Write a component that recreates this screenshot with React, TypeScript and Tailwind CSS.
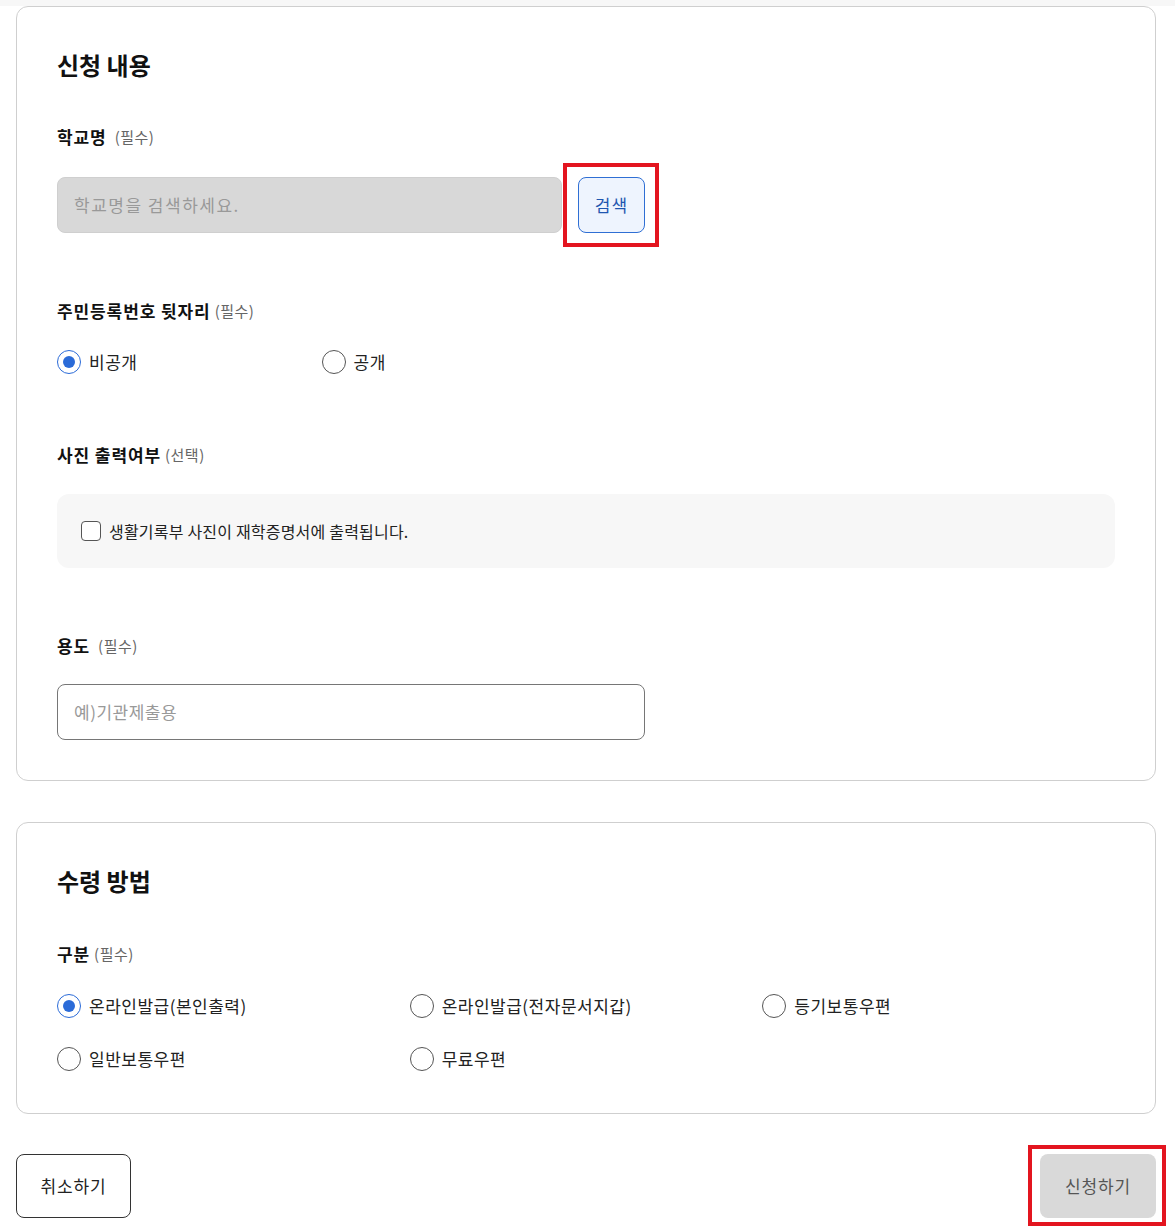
import React from "react";

const font = { fontFamily: '"Noto Sans CJK KR", "Noto Sans", sans-serif' };

function Radio({ label, checked }: { label: string; checked?: boolean }) {
  return (
    <label className="flex items-center gap-2 h-6">
      <span
        className={
          checked
            ? "w-6 h-6 rounded-full border border-[#2b6bd8] flex items-center justify-center bg-white"
            : "w-6 h-6 rounded-full border border-[#555] bg-white"
        }
      >
        {checked && <span className="w-3 h-3 rounded-full bg-[#2b6bd8]" />}
      </span>
      <span className="text-[17px] tracking-[0.5px] text-[#222] leading-6">{label}</span>
    </label>
  );
}

function Label({ title, note, gap }: { title: string; note: string; gap?: boolean }) {
  return (
    <div className="flex items-center h-6 leading-6">
      <span className="text-[17px] tracking-[0.9px] font-bold text-[#111]">{title}</span>
      <span className={gap ? "text-[15px] tracking-[0.5px] text-[#666] ml-2" : "text-[15px] tracking-[0.5px] text-[#666] ml-1"}>
        {note}
      </span>
    </div>
  );
}

export default function App() {
  return (
    <div style={font} className="bg-white w-[1175px] min-h-[1230px] text-[#111]">
      <div className="h-[6px] bg-[#f7f7f7]" />
      <div className="pl-4 w-[1156px]">
        {/* Card 1 */}
        <section className="border border-[#cfcfcf] rounded-xl px-10 pt-[42px] pb-[40px]">
          <h2 className="text-2xl font-bold leading-8 text-[#111]">신청 내용</h2>

          <div className="mt-[44px]">
            <Label title="학교명" note="(필수)" gap />
            <div className="mt-[28px] flex items-center gap-4">
              <div className="w-[505px] h-14 rounded-lg bg-[#d8d8d8] border border-[#cfcfcf] flex items-center px-4 text-[17px] tracking-[1.5px] text-[#999]">
                학교명을 검색하세요.
              </div>
              <div className="relative">
                <button className="w-[67px] h-14 rounded-lg bg-[#eef4fe] border border-[#2f6fd4] text-[17px] tracking-[1px] text-[#1f56b0]">
                  검색
                </button>
                <div className="absolute -left-[15px] -top-[14px] w-[96px] h-[84px] border-4 border-[#e3151f] pointer-events-none" />
              </div>
            </div>
          </div>

          <div className="mt-[66px]">
            <Label title="주민등록번호 뒷자리" note="(필수)" />
            <div className="mt-[27px] grid grid-cols-4">
              <Radio label="비공개" checked />
              <Radio label="공개" />
            </div>
          </div>

          <div className="mt-[69px]">
            <Label title="사진 출력여부" note="(선택)" />
            <div className="mt-[27px] h-[74px] rounded-xl bg-[#f7f7f7] flex items-center px-6 gap-2">
              <span className="w-5 h-5 rounded border border-[#555] bg-white" />
              <span className="text-base tracking-[0.2px] text-[#222]">생활기록부 사진이 재학증명서에 출력됩니다.</span>
            </div>
          </div>

          <div className="mt-[66px]">
            <Label title="용도" note="(필수)" gap />
            <div className="mt-[26px] w-[588px] h-14 rounded-lg border border-[#767676] flex items-center px-4 text-[17px] tracking-[0.5px] text-[#999]">
              예)기관제출용
            </div>
          </div>
        </section>

        {/* Card 2 */}
        <section className="mt-[41px] border border-[#cfcfcf] rounded-xl px-10 pt-[42px] pb-[42px]">
          <h2 className="text-2xl font-bold leading-8 text-[#111]">수령 방법</h2>
          <div className="mt-[45px]">
            <Label title="구분" note="(필수)" />
            <div className="mt-[28px] grid grid-cols-3 gap-y-[29px]">
              <Radio label="온라인발급(본인출력)" checked />
              <Radio label="온라인발급(전자문서지갑)" />
              <Radio label="등기보통우편" />
              <Radio label="일반보통우편" />
              <Radio label="무료우편" />
            </div>
          </div>
        </section>

        {/* Buttons */}
        <div className="mt-[40px] flex justify-between">
          <button className="w-[115px] h-16 rounded-lg border border-[#333] bg-white text-[17px] tracking-[0.8px] text-[#222]">
            취소하기
          </button>
          <div className="relative">
            <button className="w-[116px] h-16 rounded-lg bg-[#d9d9d9] text-[17px] tracking-[0.8px] text-[#555]">
              신청하기
            </button>
            <div className="absolute -left-[12px] -top-[9px] w-[138px] h-[81px] border-4 border-[#e3151f] pointer-events-none" />
          </div>
        </div>
      </div>
    </div>
  );
}
